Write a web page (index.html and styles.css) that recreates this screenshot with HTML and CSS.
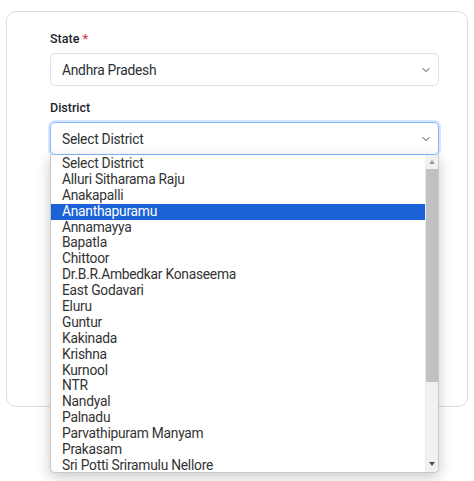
FILE: index.html
```html
<!DOCTYPE html>
<html lang="en">
<head>
<meta charset="utf-8">
<link rel="stylesheet" href="styles.css">
</head>
<body>
<div class="page">
<div class="card">
  <div class="group">
    <label class="label">State <span class="req">*</span></label>
    <div class="select">
      <span>Andhra Pradesh</span>
      <svg class="chev" viewBox="0 0 16 16" width="10" height="10"><path d="M3 5.5l5 5 5-5" fill="none" stroke="#444" stroke-width="1.6" stroke-linecap="round" stroke-linejoin="round"/></svg>
    </div>
  </div>
  <div class="group district">
    <label class="label">District</label>
    <div class="select focus">
      <span>Select District</span>
      <svg class="chev" viewBox="0 0 16 16" width="10" height="10"><path d="M3 5.5l5 5 5-5" fill="none" stroke="#444" stroke-width="1.6" stroke-linecap="round" stroke-linejoin="round"/></svg>
    </div>
    <div class="listbox">
      <ul class="options">
        <li>Select District</li>
        <li>Alluri Sitharama Raju</li>
        <li>Anakapalli</li>
        <li class="selected">Ananthapuramu</li>
        <li>Annamayya</li>
        <li>Bapatla</li>
        <li>Chittoor</li>
        <li>Dr.B.R.Ambedkar Konaseema</li>
        <li>East Godavari</li>
        <li>Eluru</li>
        <li>Guntur</li>
        <li>Kakinada</li>
        <li>Krishna</li>
        <li>Kurnool</li>
        <li>NTR</li>
        <li>Nandyal</li>
        <li>Palnadu</li>
        <li>Parvathipuram Manyam</li>
        <li>Prakasam</li>
        <li>Sri Potti Sriramulu Nellore</li>
      </ul>
      <div class="scrollbar">
        <span class="arrow up"></span>
        <div class="thumb"></div>
        <span class="arrow down"></span>
      </div>
    </div>
  </div>
</div>
</div>
</body>
</html>
```
FILE: styles.css
```css
* { box-sizing: border-box; }
html, body { margin: 0; background: #fff; }
body {
  font-family: Roboto, "Liberation Sans", Arial, sans-serif;
  color: #212529;
  min-height: 481px;
}
.page {
  min-height: 481px;
  padding: 11px 6px 0 6px;
}
.card {
  height: 396px;
  border: 1px solid #dcdcdc;
  border-radius: 10px;
  padding: 19px 28px 0 43px;
  background: #fff;
}
.group { display: flex; flex-direction: column; }
.district { margin-top: 14px; position: relative; }
.label {
  font-size: 12.5px;
  font-weight: 500;
  line-height: 16px;
  margin-bottom: 6px;
  color: #212529;
}
.req { color: #dc3545; }
.select {
  height: 33px;
  border: 1px solid #dee2e6;
  border-radius: 5px;
  display: flex;
  align-items: center;
  justify-content: space-between;
  padding: 0 7px 0 11px;
  font-size: 13.8px;
  letter-spacing: -0.25px;
  color: #2b2f33;
}
.select.focus {
  border-color: #86b7fe;
  box-shadow: 0 0 0 2px rgba(13, 110, 253, 0.18);
}
.chev { display: block; }
.listbox {
  position: absolute;
  left: 0;
  right: 0;
  top: 55px;
  height: 318px;
  background: #fff;
  border: 1px solid #c8c8c8;
  border-top: none;
  border-radius: 0 0 5px 5px;
  box-shadow: 0 4px 14px rgba(0, 0, 0, 0.22);
  display: flex;
  overflow: hidden;
  z-index: 2;
}
.options {
  list-style: none;
  margin: 0;
  padding: 1px 0 0 0;
  flex: 1;
  font-size: 13.8px;
  letter-spacing: -0.25px;
  color: #333;
}
.options li {
  height: 15.9px;
  line-height: 15.9px;
  padding-left: 11px;
  white-space: nowrap;
}
.options li.selected {
  background: #1a62d6;
  color: #fff;
}
.scrollbar {
  width: 13px;
  background: #f1f1f1;
  display: flex;
  flex-direction: column;
  align-items: center;
  border-left: 1px solid #ececec;
}
.arrow {
  width: 0;
  height: 0;
  border-left: 3.5px solid transparent;
  border-right: 3.5px solid transparent;
  margin: 5px 0;
}
.arrow.up { border-bottom: 4px solid #9a9a9a; }
.arrow.down { border-top: 4px solid #505050; margin-top: auto; margin-bottom: 6px; }
.thumb {
  width: 12px;
  height: 213px;
  background: #c1c1c1;
}
```
